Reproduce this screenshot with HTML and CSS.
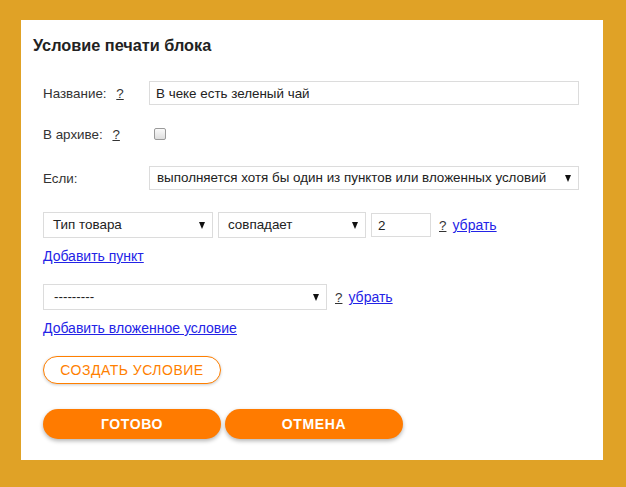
FILE: index.html
```html
<!DOCTYPE html>
<html lang="ru">
<head>
    <meta charset="UTF-8">
    <meta name="viewport" content="width=device-width, initial-scale=1.0">
    <title>Условие печати блока</title>
    <link rel="stylesheet" href="styles.css">
</head>
<body>
    <div class="panel">
        <h1 class="title">Условие печати блока</h1>
        <form action="#" class="form-content">
            <div class="row row-name">
                <label class="label">Название: <a href="#" class="help">?</a></label>
                <input type="text" class="field field-wide" value="В чеке есть зеленый чай">
            </div>
            <div class="row row-archive">
                <label class="label">В архиве: <a href="#" class="help">?</a></label>
                <input type="checkbox" class="check">
            </div>
            <div class="row row-if">
                <label class="label">Если:</label>
                <div class="select select-wide">выполняется хотя бы один из пунктов или вложенных условий</div>
            </div>
            <div class="row row-item">
                <div class="select select-type">Тип товара</div>
                <div class="select select-op">совпадает</div>
                <input type="text" class="field field-num" value="2">
                <a href="#" class="help help-item">?</a>
                <a href="#" class="link">убрать</a>
            </div>
            <div class="row row-link">
                <a href="#" class="link">Добавить пункт</a>
            </div>
            <div class="row row-nested">
                <div class="select select-nested">---------</div>
                <a href="#" class="help help-item">?</a>
                <a href="#" class="link">убрать</a>
            </div>
            <div class="row row-link">
                <a href="#" class="link">Добавить вложенное условие</a>
            </div>
            <div class="row row-create">
                <button type="button" class="btn btn-outline">Создать условие</button>
            </div>
            <div class="row row-actions">
                <button type="submit" class="btn btn-solid">Готово</button>
                <button type="reset" class="btn btn-solid">Отмена</button>
            </div>
        </form>
    </div>
</body>
</html>
```

FILE: styles.css
```css
html{
    box-sizing: border-box;
    font-family: "Liberation Sans", Arial, sans-serif;
}
*,*::before,*::after{
    box-sizing: inherit;
    padding: 0;
    margin: 0;
}
body{
    background-color: #e0a226;
    padding: 20px 23px 27px 21px;
}
.panel{
    background-color: #fff;
    height: 440px;
    padding: 0 0 0 12px;
}
.title{
    font-size: 16.3px;
    line-height: 20px;
    font-weight: bold;
    color: #222;
    padding-top: 15px;
}
.form-content{
    padding-left: 10px;
    width: 548px;
}
.row{
    display: flex;
    align-items: center;
    font-size: 13.4px;
    color: #333;
}
.row-name{ margin-top: 26px; height: 24px; }
.row-archive{ margin-top: 17px; height: 24px; }
.row-if{ margin-top: 20px; height: 24px; }
.row-item{ margin-top: 22px; height: 26px; }
.row-link{ margin-top: 10px; height: 16px; }
.row-nested{ margin-top: 20px; height: 26px; }
.row-create{ margin-top: 20px; }
.row-actions{ margin-top: 25px; gap: 4px; }
.label{
    width: 106px;
    flex-shrink: 0;
}
.help{
    color: #333;
    margin-left: 6px;
}
.help-item{
    margin-left: 8px;
}
.link{
    color: #2323e6;
    font-size: 14px;
}
.help-item + .link{
    margin-left: 6px;
}
.field{
    font-family: inherit;
    font-size: 13.4px;
    color: #222;
    height: 24px;
    border: 1px solid #dcdcdc;
    outline: none;
    padding: 0 6px;
}
.field-wide{
    width: 430px;
}
.field-num{
    width: 60px;
    margin-left: 5px;
}
.check{
    appearance: none;
    width: 12px;
    height: 12px;
    margin-left: 5px;
    border: 1px solid #9a9a9a;
    border-radius: 2px;
    background: linear-gradient(#fafafa, #dedede);
}
.select{
    position: relative;
    height: 24px;
    line-height: 22px;
    border: 1px solid #dcdcdc;
    padding-left: 7px;
    color: #222;
    white-space: nowrap;
}
.select::after{
    content: "";
    position: absolute;
    right: 7px;
    top: 8px;
    border-left: 3.5px solid transparent;
    border-right: 3.5px solid transparent;
    border-top: 7px solid #111;
}
.select-wide{
    width: 430px;
}
.select-type{
    width: 170px;
    height: 26px;
    line-height: 24px;
    padding-left: 9px;
}
.select-type::after,.select-op::after,.select-nested::after{
    top: 9px;
}
.select-op{
    width: 148px;
    height: 26px;
    line-height: 24px;
    margin-left: 5px;
    padding-left: 9px;
}
.select-nested{
    width: 284px;
    height: 26px;
    line-height: 24px;
    padding-left: 10px;
}
.btn{
    font-family: inherit;
    font-size: 14px;
    text-transform: uppercase;
    border-radius: 16px;
    cursor: pointer;
    width: 178px;
}
.btn-outline{
    height: 28px;
    background-color: #fff;
    color: #ff7f00;
    border: 1px solid #ff7f00;
    letter-spacing: 0.5px;
    box-shadow: 0 1px 3px rgba(0,0,0,.2);
}
.btn-solid{
    height: 30px;
    background-color: #ff7b00;
    color: #fff;
    font-weight: bold;
    border: none;
    letter-spacing: 0.6px;
    box-shadow: 0 2px 4px rgba(0,0,0,.3);
}
```
